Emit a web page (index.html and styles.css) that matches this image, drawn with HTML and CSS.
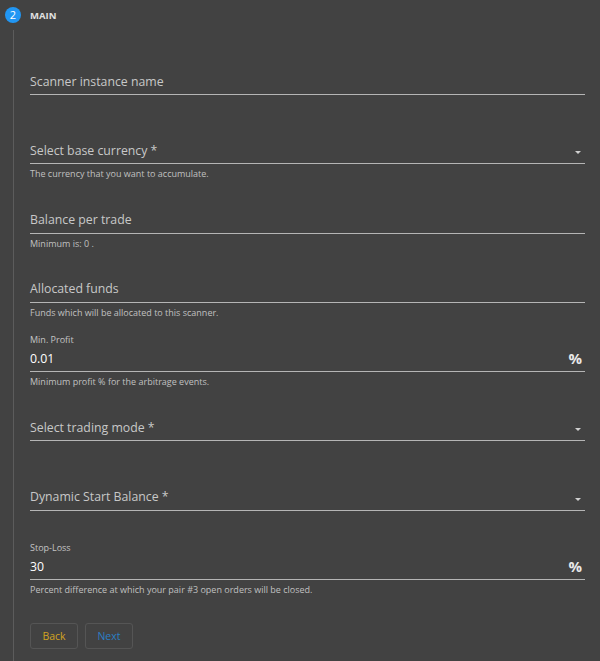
FILE: index.html
```html
<!DOCTYPE html>
<html lang="en">
<head>
    <meta charset="UTF-8">
    <meta name="viewport" content="width=device-width, initial-scale=1.0">
    <title>Scanner</title>
    <link rel="stylesheet" href="styles.css">
</head>
<body>

<div class="step-header">
    <span class="step-num">2</span>
    <span class="step-title">MAIN</span>
</div>

<div class="step-content">
    <div class="field">
        <div class="field-label"></div>
        <div class="field-input"><span class="placeholder">Scanner instance name</span></div>
        <div class="field-hint"></div>
    </div>

    <div class="field">
        <div class="field-label"></div>
        <div class="field-input"><span class="placeholder">Select base currency *</span><span class="caret"></span></div>
        <div class="field-hint">The currency that you want to accumulate.</div>
    </div>

    <div class="field">
        <div class="field-label"></div>
        <div class="field-input"><span class="placeholder">Balance per trade</span></div>
        <div class="field-hint">Minimum is: 0 .</div>
    </div>

    <div class="field">
        <div class="field-label"></div>
        <div class="field-input"><span class="placeholder">Allocated funds</span></div>
        <div class="field-hint">Funds which will be allocated to this scanner.</div>
    </div>

    <div class="field">
        <div class="field-label">Min. Profit</div>
        <div class="field-input"><span class="value">0.01</span><span class="suffix">%</span></div>
        <div class="field-hint">Minimum profit % for the arbitrage events.</div>
    </div>

    <div class="field">
        <div class="field-label"></div>
        <div class="field-input"><span class="placeholder">Select trading mode *</span><span class="caret"></span></div>
        <div class="field-hint"></div>
    </div>

    <div class="field">
        <div class="field-label"></div>
        <div class="field-input"><span class="placeholder">Dynamic Start Balance *</span><span class="caret"></span></div>
        <div class="field-hint"></div>
    </div>

    <div class="field">
        <div class="field-label">Stop-Loss</div>
        <div class="field-input"><span class="value">30</span><span class="suffix">%</span></div>
        <div class="field-hint">Percent difference at which your pair #3 open orders will be closed.</div>
    </div>

    <div class="actions">
        <button class="btn btn-back">Back</button>
        <button class="btn btn-next">Next</button>
    </div>
</div>

</body>
</html>
```

FILE: styles.css
```css
html, body {
    background-color: #424242;
}
body {
    font-family: "Open Sans", Arial, sans-serif;
    margin: 0;
    color: #fff;
    height: 661px;
    overflow: hidden;
}
.step-header {
    display: flex;
    align-items: center;
    height: 30px;
    padding-left: 5px;
}
.step-num {
    width: 16px;
    height: 16px;
    border-radius: 50%;
    background-color: #2196f3;
    color: #fff;
    font-size: 11px;
    line-height: 16px;
    text-align: center;
}
.step-title {
    margin-left: 9px;
    font-size: 9.5px;
    font-weight: 700;
    color: #e0e0e0;
}
.step-content {
    box-sizing: border-box;
    height: 631px;
    margin-left: 13px;
    border-left: 1px solid #5c5c5c;
    padding: 19px 15px 0 16px;
}
.field {
    height: 69.3px;
    display: flex;
    flex-direction: column;
}
.field-label {
    height: 21px;
    display: flex;
    align-items: flex-end;
    padding-bottom: 1px;
    box-sizing: border-box;
    font-size: 9px;
    color: #c4c4c4;
}
.field-input {
    height: 25px;
    box-sizing: border-box;
    padding-bottom: 2px;
    display: flex;
    align-items: center;
    border-bottom: 1px solid #b5b5b5;
}
.placeholder {
    flex: 1;
    font-size: 12.3px;
    color: #c8c8c8;
}
.value {
    flex: 1;
    font-size: 12.3px;
    color: #fff;
}
.suffix {
    font-size: 15px;
    font-weight: 700;
    color: #e8e8e8;
    margin-right: 3px;
}
.caret {
    width: 0;
    height: 0;
    border-left: 3px solid transparent;
    border-right: 3px solid transparent;
    border-top: 3px solid #d0d0d0;
    margin-right: 4px;
    margin-top: 5px;
}
.field-hint {
    padding-top: 3px;
    font-size: 9px;
    color: #c0c0c0;
}
.actions {
    display: flex;
    gap: 7px;
    margin-top: 20px;
}
.btn {
    width: 48px;
    height: 26px;
    background: transparent;
    border: 1px solid #555;
    border-radius: 3px;
    font-family: "Open Sans", Arial, sans-serif;
    font-size: 10.5px;
    padding: 0;
}
.btn-back {
    color: #d2a321;
}
.btn-next {
    color: #2b7fc4;
}
```
